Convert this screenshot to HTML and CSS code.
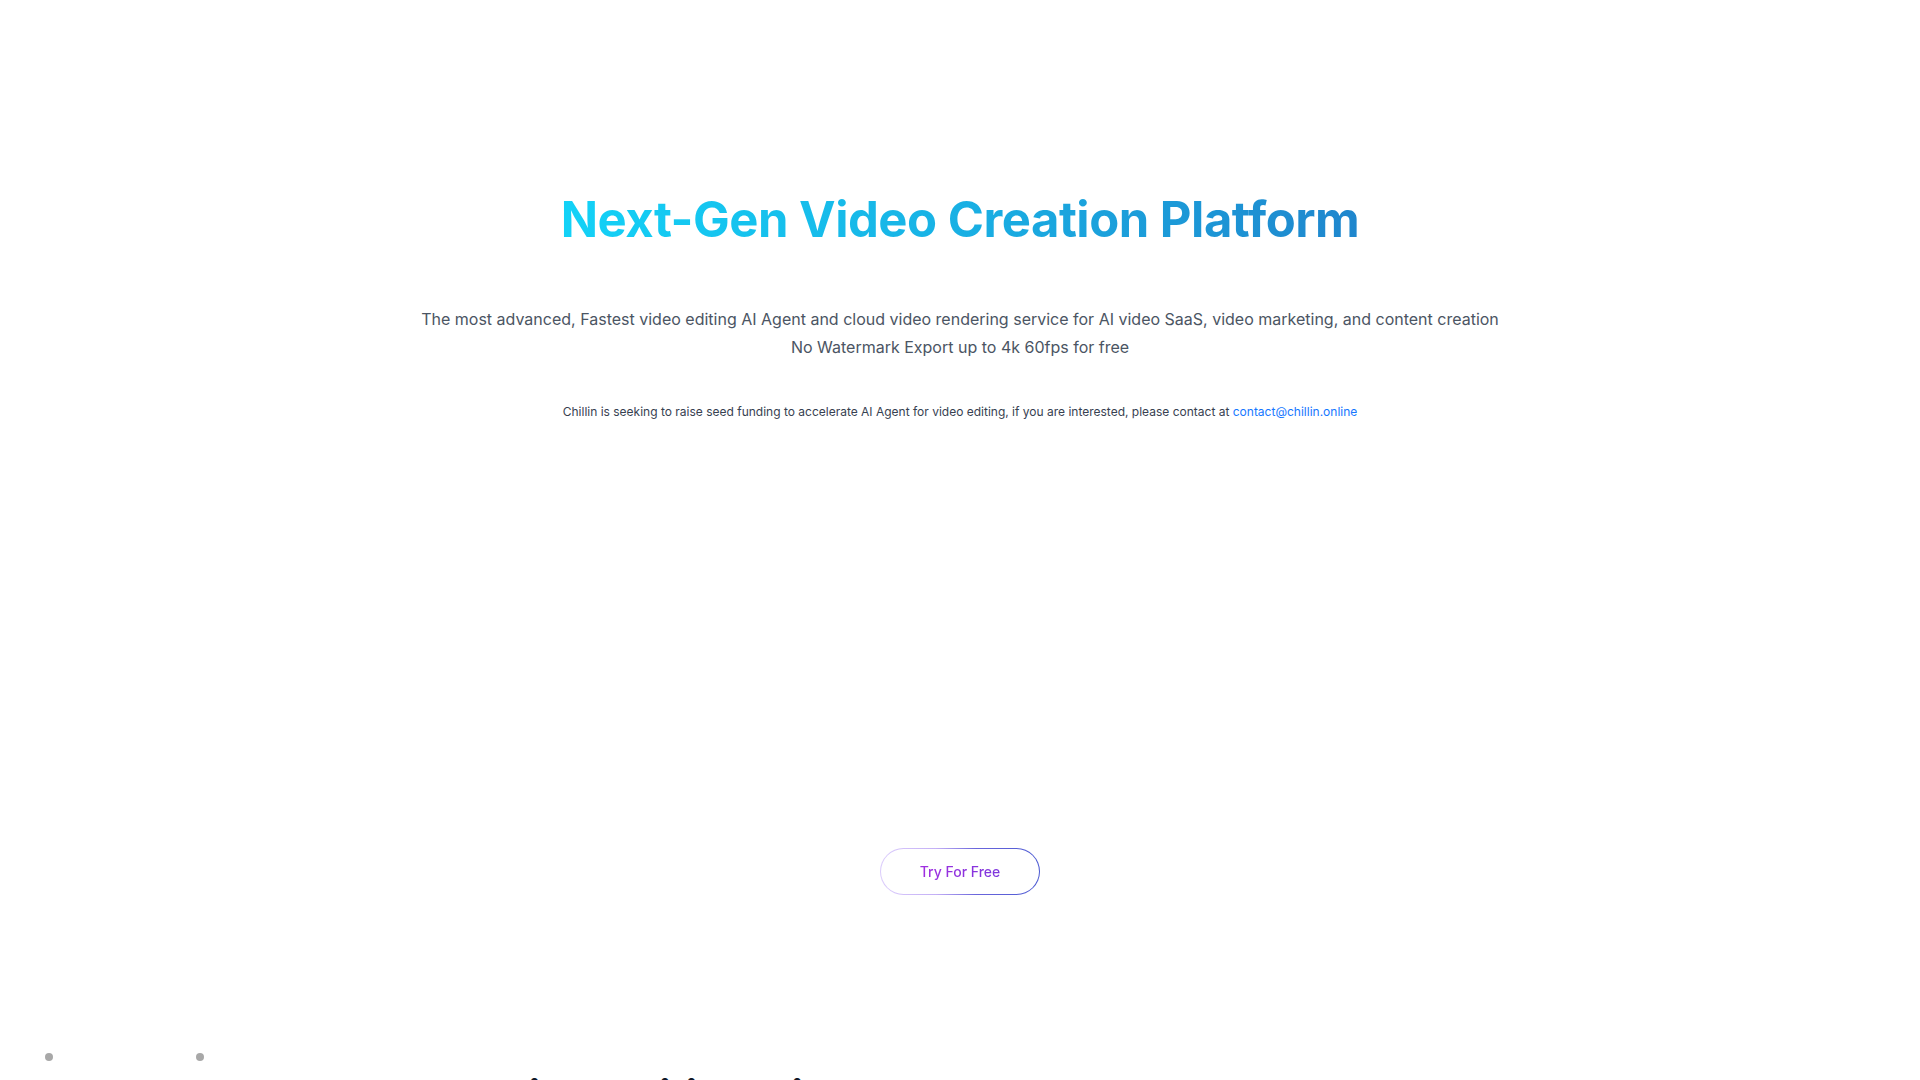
FILE: index.html
```html
<!DOCTYPE html>
<html lang="en">
<head>
<meta charset="utf-8">
<title>Chillin - Next-Gen Video Creation Platform</title>
<link rel="stylesheet" href="styles.css">
</head>
<body>
<main class="page">
  <section class="hero">
    <h1 class="hero-title">Next-Gen Video Creation Platform</h1>
    <p class="hero-sub">The most advanced, Fastest video editing AI Agent and cloud video rendering service for AI video SaaS, video marketing, and content creation<br>No Watermark Export up to 4k 60fps for free</p>
    <p class="hero-note">Chillin is seeking to raise seed funding to accelerate AI Agent for video editing, if you are interested, please contact at <a class="hero-link" href="#">contact@chillin.online</a></p>
    <div class="hero-media"></div>
    <div class="hero-actions">
      <a class="btn-try" href="#"><span class="btn-try-text">Try For Free</span></a>
    </div>
  </section>
  <section class="next">
    <div class="dots">
      <span class="dot"></span>
      <span class="dot"></span>
    </div>
    <h2 class="next-title">Flexible editing with AI-powered tools</h2>
  </section>
</main>
</body>
</html>
```
FILE: styles.css
```css
html, body {
  margin: 0;
  padding: 0;
  background: #ffffff;
}
body {
  font-family: Inter, "Noto Sans", "Liberation Sans", sans-serif;
  color: #1f2937;
  overflow: hidden;
  height: 1080px;
}
.page {
  display: flex;
  flex-direction: column;
}
.hero {
  display: flex;
  flex-direction: column;
  align-items: center;
  padding-top: 191px;
}
.hero-title {
  margin: 0;
  font-size: 49px;
  line-height: 58px;
  font-weight: 700;
  letter-spacing: -0.01em;
  background: linear-gradient(90deg, #13d2f7 0%, #18b4e6 45%, #1f86cd 100%);
  -webkit-background-clip: text;
  background-clip: text;
  color: transparent;
}
.hero-sub {
  margin: 56px 0 0;
  font-size: 16px;
  line-height: 28px;
  color: #4b5563;
  text-align: center;
}
.hero-note {
  margin: 41px 0 0;
  font-size: 12px;
  line-height: 20px;
  color: #374151;
  text-align: center;
}
.hero-link {
  color: #1677ff;
  text-decoration: none;
}
.hero-media {
  height: 426px;
}
.hero-actions {
  display: flex;
  justify-content: center;
}
.btn-try {
  display: flex;
  align-items: center;
  justify-content: center;
  width: 160px;
  height: 47px;
  box-sizing: border-box;
  border-radius: 24px;
  border: 1.5px solid transparent;
  background: linear-gradient(#fff, #fff) padding-box,
              linear-gradient(90deg, #dccdfc 0%, #c4b0f6 35%, #6b66dc 60%, #4c5ad2 100%) border-box;
  text-decoration: none;
}
.btn-try-text {
  font-size: 14px;
  font-weight: 500;
  background: linear-gradient(90deg, #a12fe0 0%, #7d36dc 100%);
  -webkit-background-clip: text;
  background-clip: text;
  color: transparent;
}
.next {
  display: flex;
  flex-direction: column;
  padding-top: 158px;
}
.dots {
  display: flex;
  gap: 143px;
  padding-left: 45px;
}
.dot {
  width: 8px;
  height: 8px;
  border-radius: 50%;
  background: #a8a8a8;
}
.next-title {
  margin: 10px 0 0 447px;
  font-size: 40px;
  line-height: 48px;
  font-weight: 800;
  color: #111827;
}
```
